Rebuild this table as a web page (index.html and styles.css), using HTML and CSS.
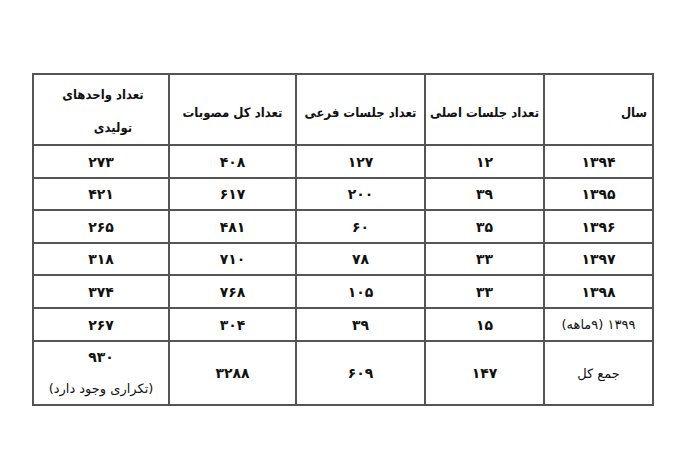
FILE: index.html
```html
<!DOCTYPE html>
<html lang="fa">
<head>
<meta charset="utf-8">
<link rel="stylesheet" href="styles.css">
</head>
<body>
<div class="page">
  <table class="stats" dir="rtl">
    <colgroup>
      <col class="c1"><col class="c2"><col class="c3"><col class="c4"><col class="c5">
    </colgroup>
    <thead>
      <tr class="head">
        <th class="year">سال</th>
        <th>تعداد جلسات اصلی</th>
        <th>تعداد جلسات فرعی</th>
        <th>تعداد کل مصوبات</th>
        <th class="units"><span class="l1">تعداد واحدهای</span><span class="l2">تولیدی</span></th>
      </tr>
    </thead>
    <tbody>
      <tr class="r33"><td>۱۳۹۴</td><td>۱۲</td><td>۱۲۷</td><td>۴۰۸</td><td>۲۷۳</td></tr>
      <tr class="r32"><td>۱۳۹۵</td><td>۳۹</td><td>۲۰۰</td><td>۶۱۷</td><td>۴۲۱</td></tr>
      <tr class="r33"><td>۱۳۹۶</td><td>۳۵</td><td>۶۰</td><td>۴۸۱</td><td>۲۶۵</td></tr>
      <tr class="r32"><td>۱۳۹۷</td><td>۳۳</td><td>۷۸</td><td>۷۱۰</td><td>۳۱۸</td></tr>
      <tr class="r33"><td>۱۳۹۸</td><td>۳۳</td><td>۱۰۵</td><td>۷۶۸</td><td>۳۷۴</td></tr>
      <tr class="r33"><td class="light">۱۳۹۹ (۹ماهه)</td><td>۱۵</td><td>۳۹</td><td>۳۰۴</td><td>۲۶۷</td></tr>
      <tr class="total"><td class="light">جمع کل</td><td>۱۴۷</td><td>۶۰۹</td><td>۳۲۸۸</td><td><span class="t1">۹۳۰</span><span class="t2">(تکراری وجود دارد)</span></td></tr>
    </tbody>
  </table>
</div>
</body>
</html>
```
FILE: styles.css
```css
html, body {
  margin: 0;
  background: #fff;
}
.page {
  padding: 73px 0 0 32px;
}
.stats {
  border-collapse: collapse;
  table-layout: fixed;
  width: 622px;
  font-family: "DejaVu Sans", sans-serif;
  color: #111;
}
.c1 { width: 109px; }
.c2 { width: 119px; }
.c3 { width: 129px; }
.c4 { width: 127px; }
.c5 { width: 136px; }
.stats th, .stats td {
  border: 2px solid #555;
  padding: 0;
}
.head { height: 70px; }
.stats th {
  font-family: "DejaVu Sans Condensed", "DejaVu Sans", sans-serif;
  font-size: 13px;
  font-weight: bold;
  text-align: center;
  padding-top: 6px;
  white-space: nowrap;
}
.stats th.year {
  text-align: right;
  padding-right: 5px;
}
.stats th.units {
  padding-top: 3px;
  padding-left: 4px;
}
.units .l1, .units .l2 {
  display: block;
}
.units .l1 { line-height: 34px; }
.units .l2 { line-height: 32px; padding-left: 20px; }
.stats tr.r33 { height: 33px; }
.stats tr.r32 { height: 32px; }
.stats td {
  text-align: center;
  font-size: 14px;
  font-weight: bold;
}
.stats td.light {
  font-weight: normal;
  font-size: 13px;
}
.stats tr.total { height: 63px; }
.total .t1, .total .t2 { display: block; line-height: 31px; }
.total .t2 { font-weight: normal; font-size: 13px; }
```
